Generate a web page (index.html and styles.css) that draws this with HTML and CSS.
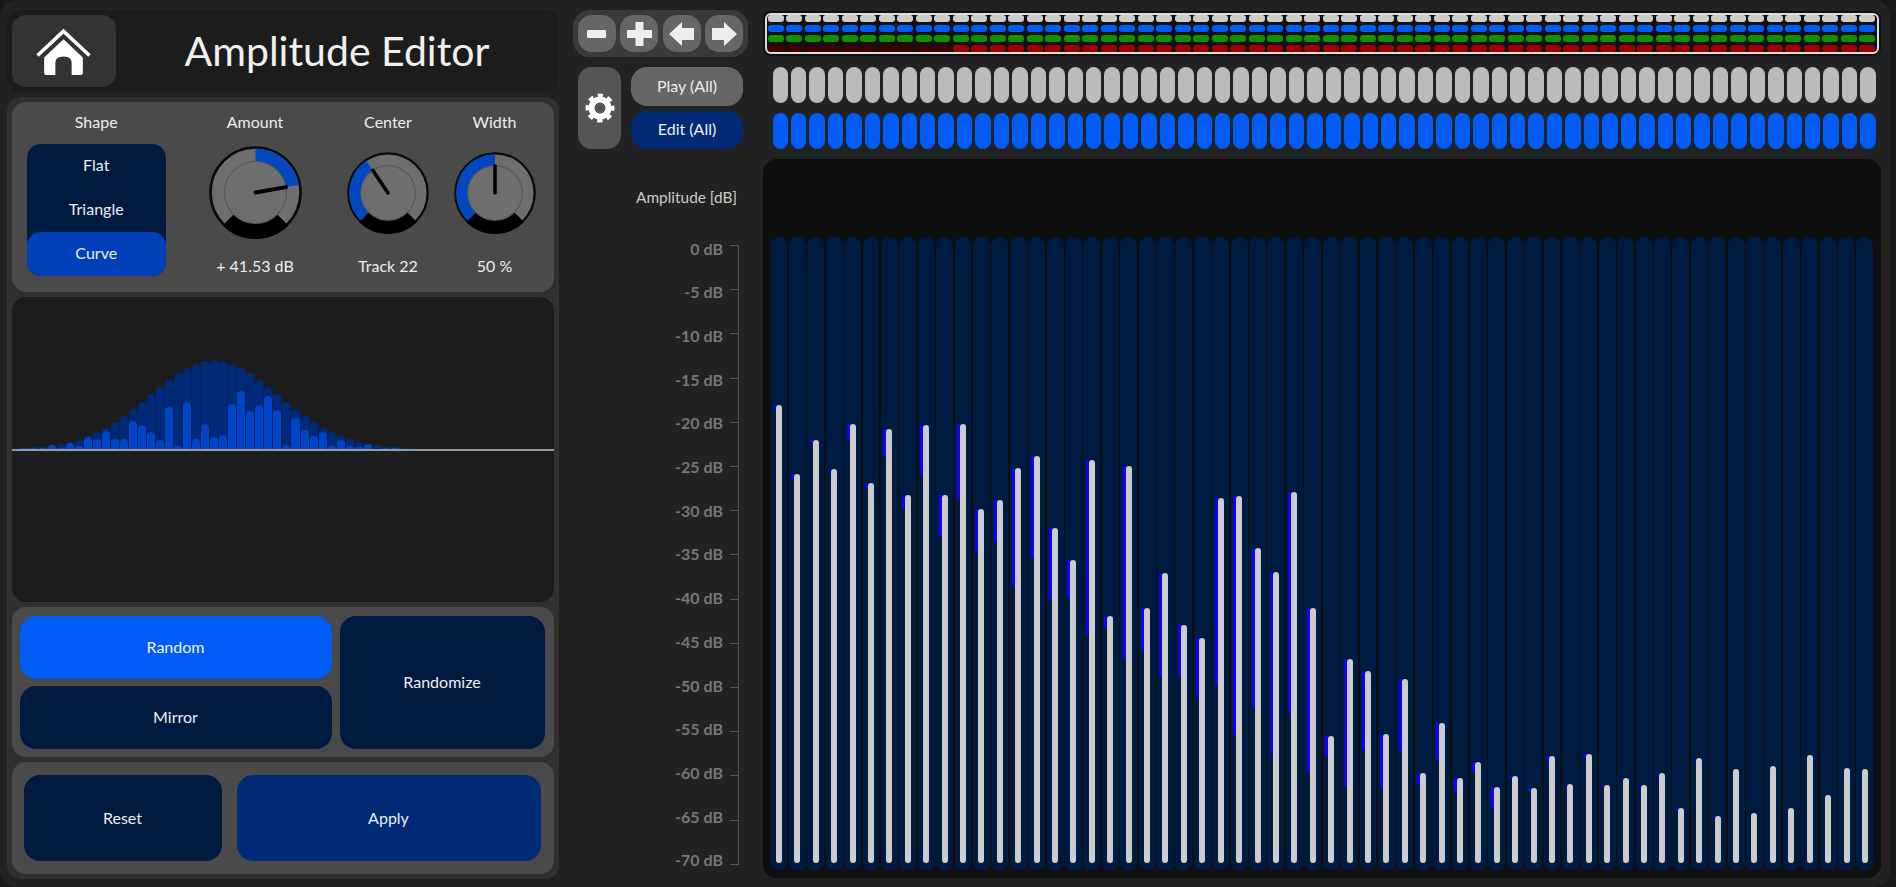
FILE: index.html
```html
<!DOCTYPE html>
<html lang="en">
<head>
  <meta charset="UTF-8">
  <title>Amplitude Editor</title>
  <link rel="stylesheet" href="styles.css">
</head>
<body>
<div class="app">

  <div class="left">
    <div class="header">
      <button class="home-button">
        <svg class="home-icon" viewBox="0 0 54 46">
          <polyline points="1.5,27 27,3 52.5,27" fill="none" stroke="#fff" stroke-width="3.5"/>
          <path d="M8 29 L27 11 L46 29 V44 Q46 46 44 46 H35 V34 Q35 28 27 28 Q19 28 19 34 V46 H10 Q8 46 8 44 Z" fill="#fff"/>
        </svg>
      </button>
      <h1 class="title">Amplitude Editor</h1>
    </div>

    <div class="left-body">
      <div class="panel params">
        <div class="param shape-param">
          <div class="param-label">Shape</div>
          <div class="shape-list">
            <div class="shape-item">Flat</div>
            <div class="shape-item">Triangle</div>
            <div class="shape-item active">Curve</div>
          </div>
        </div>

        <div class="param amount-param">
          <div class="param-label">Amount</div>
          <div class="knob-wrap">
            <svg class="knob knob-big" viewBox="-46.5 -46.5 93 93">
              <circle r="45" class="knob-disc"/>
              <path class="knob-stop" d="M32.9 32.9 A46.5 46.5 0 0 1 -32.9 32.9 L-21.9 21.9 A31 31 0 0 0 21.9 21.9 Z"/>
              <path class="knob-fill" d="M0 -44 A44 44 0 0 1 43.3 -7.6 L30.5 -5.4 A31 31 0 0 0 0 -31 Z"/>
              <circle r="31" class="knob-inner"/>
              <line x1="0" y1="0" x2="30.5" y2="-5.4" class="knob-hand"/>
            </svg>
          </div>
          <div class="param-value">+ 41.53 dB</div>
        </div>

        <div class="param center-param">
          <div class="param-label">Center</div>
          <div class="knob-wrap">
            <svg class="knob" viewBox="-46.5 -46.5 93 93">
              <circle r="45" class="knob-disc"/>
              <path class="knob-stop" d="M32.9 32.9 A46.5 46.5 0 0 1 -32.9 32.9 L-21.9 21.9 A31 31 0 0 0 21.9 21.9 Z"/>
              <path class="knob-fill" d="M-31.1 31.1 A44 44 0 0 1 -24.6 -36.5 L-17.3 -25.7 A31 31 0 0 0 -21.9 21.9 Z"/>
              <circle r="31" class="knob-inner"/>
              <line x1="0" y1="0" x2="-17.3" y2="-25.7" class="knob-hand"/>
            </svg>
          </div>
          <div class="param-value">Track 22</div>
        </div>

        <div class="param width-param">
          <div class="param-label">Width</div>
          <div class="knob-wrap">
            <svg class="knob" viewBox="-46.5 -46.5 93 93">
              <circle r="45" class="knob-disc"/>
              <path class="knob-stop" d="M32.9 32.9 A46.5 46.5 0 0 1 -32.9 32.9 L-21.9 21.9 A31 31 0 0 0 21.9 21.9 Z"/>
              <path class="knob-fill" d="M-31.1 31.1 A44 44 0 0 1 0 -44 L0 -31 A31 31 0 0 0 -21.9 21.9 Z"/>
              <circle r="31" class="knob-inner"/>
              <line x1="0" y1="0" x2="0" y2="-31" class="knob-hand"/>
            </svg>
          </div>
          <div class="param-value">50 %</div>
        </div>
      </div>

      <div class="curve-panel">
        <div class="curve-top" id="curve"></div>
        <div class="curve-axis"></div>
      </div>

      <div class="panel random-panel">
        <button class="btn btn-bright random-btn">Random</button>
        <button class="btn btn-navy mirror-btn">Mirror</button>
        <button class="btn btn-navy randomize-btn">Randomize</button>
      </div>

      <div class="panel apply-panel">
        <button class="btn btn-navy reset-btn">Reset</button>
        <button class="btn btn-blue apply-btn">Apply</button>
      </div>
    </div>
  </div>

  <div class="middle">
    <div class="tools">
      <button class="tool-button">
        <svg class="tool-icon" viewBox="0 0 25 24"><rect x="3" y="8" width="19" height="8" rx="1" fill="#eee"/></svg>
      </button>
      <button class="tool-button">
        <svg class="tool-icon" viewBox="0 0 25 24"><path d="M8.5 0 H16.5 V8 H25 V16 H16.5 V24 H8.5 V16 H0 V8 H8.5 Z" fill="#eee"/></svg>
      </button>
      <button class="tool-button">
        <svg class="tool-icon" viewBox="0 0 25 24"><path d="M0 12 L13 0 V6 H25 V18 H13 V24 Z" fill="#eee"/></svg>
      </button>
      <button class="tool-button">
        <svg class="tool-icon" viewBox="0 0 25 24"><path d="M25 12 L12 0 V6 H0 V18 H12 V24 Z" fill="#eee"/></svg>
      </button>
    </div>

    <div class="modes">
      <button class="settings-button">
        <svg class="gear" viewBox="-15 -15 30 30">
          <circle r="8.5" fill="none" stroke="#fff" stroke-width="6"/>
          <circle r="12" fill="none" stroke="#fff" stroke-width="5" stroke-dasharray="5 4.42" stroke-dashoffset="2.5"/>
        </svg>
      </button>
      <div class="mode-stack">
        <button class="mode-button play-mode">Play (All)</button>
        <button class="mode-button edit-mode">Edit (All)</button>
      </div>
    </div>

    <div class="amp-label">Amplitude [dB]</div>

    <div class="scale">
      <div class="scale-labels">
        <span>0 dB</span>
        <span>-5 dB</span>
        <span>-10 dB</span>
        <span>-15 dB</span>
        <span>-20 dB</span>
        <span>-25 dB</span>
        <span>-30 dB</span>
        <span>-35 dB</span>
        <span>-40 dB</span>
        <span>-45 dB</span>
        <span>-50 dB</span>
        <span>-55 dB</span>
        <span>-60 dB</span>
        <span>-65 dB</span>
        <span>-70 dB</span>
      </div>
      <div class="scale-ticks">
        <i></i><i></i><i></i><i></i><i></i>
        <i></i><i></i><i></i><i></i><i></i>
        <i></i><i></i><i></i><i></i><i></i>
      </div>
    </div>
  </div>

  <div class="right">
    <div class="led-strip">
      <div class="led-row" id="ledGrey"></div>
      <div class="led-row" id="ledBlue"></div>
      <div class="led-row" id="ledGreen"></div>
      <div class="led-row" id="ledRed"></div>
    </div>
    <div class="pad-row" id="padsGrey"></div>
    <div class="pad-row" id="padsBlue"></div>
    <div class="plot">
      <div class="tracks" id="tracks"></div>
    </div>
  </div>

</div>
<script src="script.js"></script>
</body>
</html>
```

FILE: styles.css
```css
* {
  box-sizing: border-box;
}

html, body {
  height: 100%;
}

body {
  margin: 0;
  background-color: #181818;
  color: #eee;
  font-family: Lato, "Open Sans", sans-serif;
  font-size: 16px;
  overflow: hidden;
}

button {
  border: none;
  padding: 0 0 2px;
  color: inherit;
  font: inherit;
  cursor: pointer;
}

.app {
  display: flex;
  width: 1890px;
  height: 887px;
  padding: 10px 0 0 6.5px;
  background-color: #222;
  border-radius: 16px;
}

/* left column */
.left {
  width: 552px;
  flex: none;
}

.header {
  display: flex;
  height: 82px;
  padding: 5px;
  background-color: #1c1c1c;
  border-radius: 14px;
}

.home-button {
  display: flex;
  align-items: center;
  justify-content: center;
  width: 104px;
  padding: 0;
  background-color: #333;
  border-radius: 14px;
}

.home-icon {
  width: 55px;
  height: 47px;
}

.title {
  flex: 1;
  margin: 0;
  padding-left: 5px;
  font-size: 41px;
  font-weight: 400;
  line-height: 72px;
  text-align: center;
  color: #f0f0f0;
}

.left-body {
  display: flex;
  flex-direction: column;
  gap: 5px;
  height: 782px;
  margin-top: 5px;
  padding: 5px;
  background-color: #303030;
  border-radius: 14px;
}

.panel {
  background-color: #4a4a4a;
  border-radius: 14px;
}

.params {
  display: flex;
  height: 190px;
  padding: 11px 0 0 15px;
}

.param {
  display: flex;
  flex-direction: column;
  align-items: center;
}

.param-label {
  line-height: 18px;
}

.shape-param {
  width: 139.5px;
}

.amount-param {
  width: 100px;
  margin-left: 39px;
}

.center-param {
  width: 90px;
  margin-left: 38px;
}

.width-param {
  width: 90px;
  margin-left: 16.5px;
}

.shape-list {
  width: 100%;
  margin-top: 13px;
  background-color: #001a40;
  border-radius: 14px;
}

.shape-item {
  height: 44px;
  line-height: 42px;
  text-align: center;
  border-radius: 14px;
}

.shape-item.active {
  background-color: #0040b8;
}

.knob-wrap {
  display: flex;
  align-items: center;
  justify-content: center;
  height: 93px;
  margin-top: 15px;
}

.knob {
  width: 82px;
  height: 82px;
}

.knob-big {
  width: 93px;
  height: 93px;
}

.knob-disc {
  fill: #6e6e6e;
  stroke: #0a0a0a;
  stroke-width: 2.6;
}

.knob-stop {
  fill: #000;
}

.knob-fill {
  fill: #0047c0;
}

.knob-inner {
  fill: #6e6e6e;
  stroke: #555;
  stroke-width: 1.2;
}

.knob-hand {
  stroke: #000;
  stroke-width: 4;
  stroke-linecap: round;
}

.param-value {
  margin-top: 18px;
  line-height: 18px;
}

/* curve preview */
.curve-panel {
  height: 305px;
  background-color: #1c1c1c;
  border-radius: 14px;
  overflow: hidden;
}

.curve-top {
  display: flex;
  align-items: flex-end;
  height: 152px;
}

.curve-col {
  display: grid;
  align-items: end;
  flex: 1;
  height: 100%;
}

.curve-bell, .curve-level {
  grid-area: 1 / 1;
  border-radius: 4px 4px 0 0;
}

.curve-bell {
  background-color: #002a78;
  border-right: 1px solid #00246a;
}

.curve-level {
  margin-right: 1px;
  background-color: #0044c8;
}

.curve-axis {
  height: 2px;
  background-color: #999;
}

.random-panel {
  display: grid;
  grid-template-columns: 312px 205px;
  grid-template-rows: 63px 63px;
  gap: 7px 8px;
  height: 150px;
  padding: 9px 8px;
}

.randomize-btn {
  grid-column: 2;
  grid-row: 1 / 3;
}

.apply-panel {
  display: flex;
  gap: 15px;
  height: 112px;
  padding: 13px 12px;
}

.btn {
  border-radius: 16px;
}

.btn-bright {
  background-color: #005cf5;
}

.btn-navy {
  background-color: #001a40;
}

.btn-blue {
  background-color: #002a75;
}

.reset-btn {
  width: 198px;
}

.apply-btn {
  width: 304px;
}

/* middle column */
.middle {
  width: 190px;
  flex: none;
  margin-left: 14.5px;
}

.tools {
  display: flex;
  gap: 4.5px;
  width: 175px;
  height: 47px;
  padding: 5px;
  background-color: #3a3a3a;
  border-radius: 16px;
}

.tool-button {
  display: flex;
  align-items: center;
  justify-content: center;
  width: 38px;
  padding: 0;
  background-color: #666;
  border-radius: 14px;
}

.tool-icon {
  width: 25px;
  height: 24px;
}

.modes {
  display: flex;
  gap: 10px;
  width: 165px;
  height: 82px;
  margin: 10px 0 0 5px;
}

.settings-button {
  display: flex;
  align-items: center;
  justify-content: center;
  width: 43px;
  padding: 0;
  background-color: #555;
  border-radius: 14px;
}

.gear {
  width: 30px;
  height: 30px;
}

.mode-stack {
  display: flex;
  flex-direction: column;
  gap: 5px;
  flex: 1;
}

.mode-button {
  flex: 1;
  border-radius: 16px;
}

.play-mode {
  background-color: #666;
}

.edit-mode {
  background-color: #002a75;
}

.amp-label {
  width: 164px;
  margin-top: 39px;
  font-size: 15.4px;
  line-height: 18px;
  text-align: right;
  color: #ccc;
}

.scale {
  display: flex;
  gap: 7px;
  justify-content: flex-end;
  width: 166px;
  margin-top: 39px;
}

.scale-labels {
  display: flex;
  flex-direction: column;
  justify-content: space-between;
  align-items: flex-end;
  height: 613px;
  margin-top: 2.5px;
}

.scale-labels span {
  height: 1px;
  line-height: 1px;
  color: #777;
  font-weight: 700;
}

.scale-ticks {
  display: flex;
  flex-direction: column;
  justify-content: space-between;
  width: 9px;
  height: 620px;
  border-right: 1px solid #555;
}

.scale-ticks i {
  height: 1px;
  background-color: #555;
}

/* right column */
.right {
  display: flex;
  flex-direction: column;
  width: 1118px;
  flex: none;
  margin-left: -0.5px;
}

.led-strip {
  display: flex;
  flex-direction: column;
  gap: 3px;
  width: 1114px;
  height: 41px;
  margin: 3px 0 0 2px;
  padding: 0 1px;
  background-color: #111;
  border: 2px solid #ddd;
  border-radius: 6px;
  box-shadow: 0 0 0 2px #111;
}

.led-row {
  display: flex;
  gap: 2.4px;
  height: 7px;
}

.led {
  flex: 1;
  border-radius: 3px;
}

.led-grey {
  background-color: #ccc;
}

.led-blue {
  background-color: #005cf5;
}

.led-green {
  background-color: #119000;
}

.led-red {
  background-color: #a00000;
}

.led-off {
  background-color: #3e0000;
}

.pad-row {
  display: flex;
  gap: 3px;
  width: 1103px;
  height: 36px;
  margin: 13px 0 0 10px;
}

.pad-row + .pad-row {
  margin-top: 10px;
}

.pad {
  flex: 1;
  border-radius: 8px;
}

.pad-grey {
  background-color: #bbb;
}

.pad-blue {
  background-color: #005cf5;
}

.plot {
  height: 719px;
  margin-top: 10px;
  padding: 78px 7px 7px 8px;
  background-color: #0f0f0f;
  border-radius: 14px;
}

.tracks {
  display: flex;
  gap: 1.5px;
  height: 634px;
}

.track {
  display: flex;
  align-items: flex-end;
  justify-content: center;
  flex: 1;
  padding-bottom: 8px;
  background-color: #001b42;
  border-radius: 9px;
}

.level {
  position: relative;
  width: 6px;
  background-color: #ccc;
  border-radius: 3px;
}

.level-prev {
  position: absolute;
  top: 0;
  right: 100%;
  width: 3px;
  background-color: #1000ff;
}
```

FILE: script.js
```js
const TRACKS = 60;

// top of each white bar, and where the blue mark behind it stops (page pixels)
const tops = [405,474,440,469,424,483,429,495,425,495,424,509,500,468,456,528,560,460,616,466,608,573,625,638,498,496,548,572,492,608,736,659,671,734,679,773,723,778,762,787,776,788,756,784,754,785,778,785,773,808,758,816,769,813,766,808,755,795,768,769];
const marks = [409,479,443,471,439,488,456,508,475,536,499,553,542,586,558,600,598,634,628,659,651,676,675,697,685,735,707,753,713,772,756,786,750,787,751,785,760,792,772,808,778,791,761,785,757,786,779,786,774,809,759,817];
const BAR_BOTTOM = 863;

// heights of the lighter bars in the curve preview
const curveLevels = [0,1,1,1,4,1,6,3,12,10,18,10,10,28,24,17,9,42,3,47,10,25,12,14,45,58,38,44,53,39,4,31,19,13,17,3,9,3,2,5,0,1,1];

function fillRow(id, className, count) {
  const row = document.getElementById(id);
  for (let i = 0; i < count; i++) {
    const cell = document.createElement('div');
    cell.className = className;
    row.appendChild(cell);
  }
  return row;
}

fillRow('ledGrey', 'led led-grey', TRACKS);
fillRow('ledBlue', 'led led-blue', TRACKS);
fillRow('ledGreen', 'led led-green', TRACKS);
const redRow = fillRow('ledRed', 'led led-red', TRACKS);
for (let i = 0; i < 10; i++) {
  redRow.children[i].className = 'led led-off';
}

fillRow('padsGrey', 'pad pad-grey', TRACKS);
fillRow('padsBlue', 'pad pad-blue', TRACKS);

const tracks = document.getElementById('tracks');
tops.forEach((top, i) => {
  const track = document.createElement('div');
  track.className = 'track';
  const level = document.createElement('div');
  level.className = 'level';
  level.style.height = `${BAR_BOTTOM - top}px`;
  if (marks[i]) {
    const prev = document.createElement('div');
    prev.className = 'level-prev';
    prev.style.height = `${marks[i] - top}px`;
    level.appendChild(prev);
  }
  track.appendChild(level);
  tracks.appendChild(track);
});

const curve = document.getElementById('curve');
for (let i = 0; i < TRACKS; i++) {
  const col = document.createElement('div');
  col.className = 'curve-col';
  const bellHeight = 89 * Math.exp(-Math.pow(i - 22, 2) / (2 * 7.1 * 7.1));
  if (bellHeight >= 0.7) {
    const bell = document.createElement('div');
    bell.className = 'curve-bell';
    bell.style.height = `${bellHeight.toFixed(1)}px`;
    col.appendChild(bell);
  }
  if (curveLevels[i]) {
    const level = document.createElement('div');
    level.className = 'curve-level';
    level.style.height = `${curveLevels[i]}px`;
    col.appendChild(level);
  }
  curve.appendChild(col);
}
```
